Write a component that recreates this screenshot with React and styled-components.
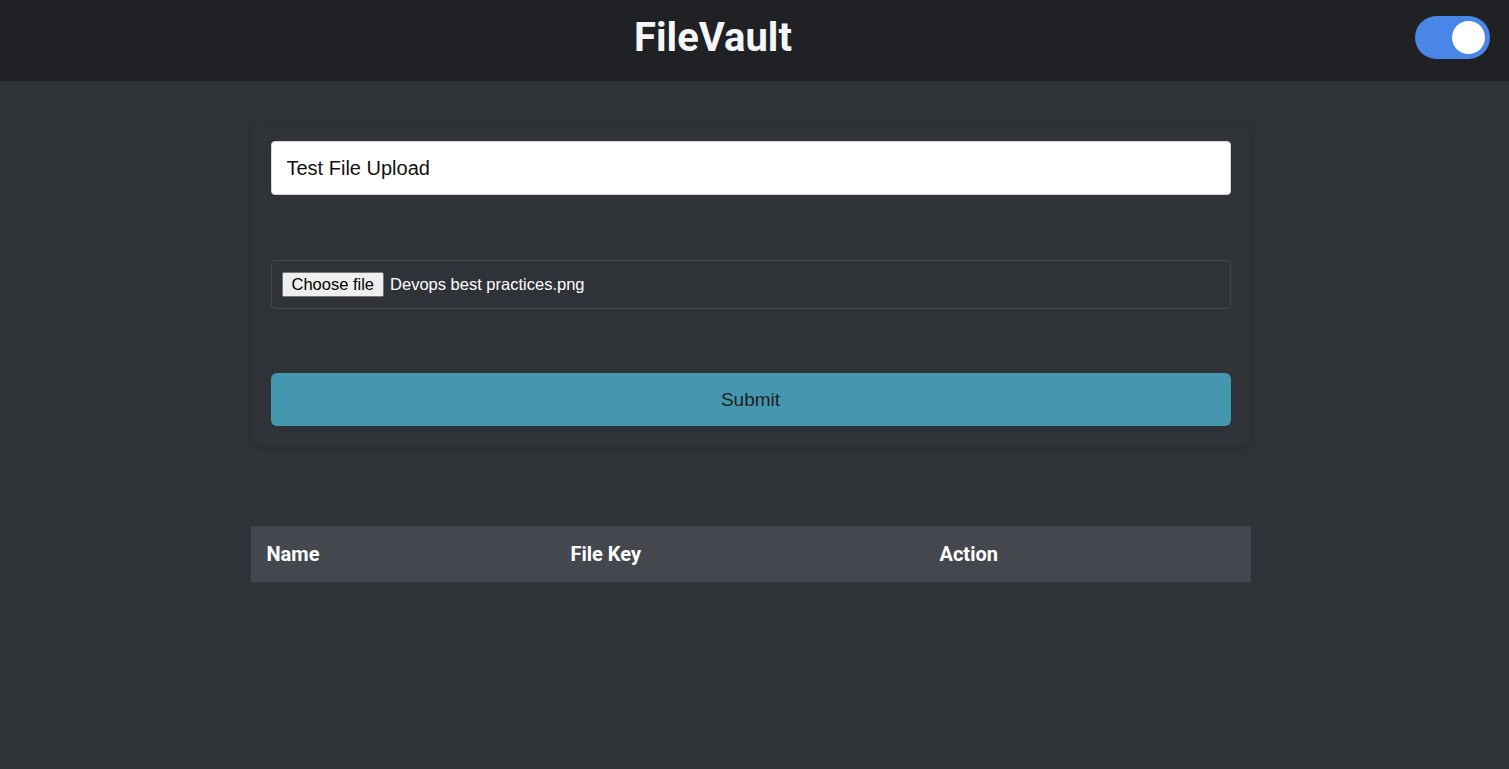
import React, { useState } from "react";
import styled, { createGlobalStyle } from "styled-components";

const GlobalStyle = createGlobalStyle`
  * { box-sizing: border-box; }
  body {
    margin: 0;
    background: #303338;
    font-family: "Liberation Sans", Arial, sans-serif;
  }
`;

const Page = styled.div`
  min-height: 769px;
  background: #303338;
`;

const Header = styled.header`
  display: flex;
  align-items: center;
  height: 81px;
  padding: 0 19px 6px 11px;
  background: #202125;
`;

const Title = styled.h1`
  flex: 1;
  margin: 0;
  text-align: center;
  font-family: Roboto, "Liberation Sans", sans-serif;
  font-size: 40px;
  font-weight: 700;
  color: #f5f6f8;
`;

const Toggle = styled.button`
  position: relative;
  width: 75px;
  height: 43px;
  border: none;
  border-radius: 22px;
  padding: 0;
  background: ${(p) => (p.$on ? "#4a86e8" : "#7a7d83")};
  cursor: pointer;
`;

const Knob = styled.span`
  position: absolute;
  top: 5px;
  left: ${(p) => (p.$on ? "37px" : "5px")};
  width: 33px;
  height: 33px;
  border-radius: 50%;
  background: #ffffff;
`;

const Main = styled.main`
  display: flex;
  flex-direction: column;
  align-items: center;
  padding: 40px 8px 0 0;
`;

const Card = styled.form`
  display: flex;
  flex-direction: column;
  gap: 65px;
  width: 1000px;
  padding: 20px;
  background: #2f3237;
  border-radius: 8px;
  box-shadow: 0 2px 8px rgba(0, 0, 0, 0.18);
`;

const TextInput = styled.input`
  width: 100%;
  height: 54px;
  padding: 0 15px;
  border: 1px solid #d8d8d8;
  border-radius: 4px;
  background: #ffffff;
  font-family: "Liberation Sans", Arial, sans-serif;
  font-size: 20px;
  color: #111;
  outline: none;
`;

const FileBox = styled.label`
  display: flex;
  align-items: center;
  gap: 6px;
  height: 49px;
  padding: 0 10px;
  border: 1px solid #45484d;
  border-radius: 4px;
  font-size: 16.5px;
  color: #ffffff;
`;

const FakeButton = styled.span`
  display: inline-flex;
  align-items: center;
  height: 25px;
  padding: 0 9px;
  border: 1px solid #767676;
  border-radius: 2px;
  background: #efefef;
  color: #000;
  font-size: 16.5px;
`;

const Submit = styled.button`
  height: 53px;
  margin-top: -1px;
  border: none;
  border-radius: 6px;
  background: #4596af;
  font-family: "Liberation Sans", Arial, sans-serif;
  font-size: 19px;
  color: #1c1f22;
  cursor: pointer;
`;

const Table = styled.table`
  width: 1000px;
  margin-top: 80px;
  border-collapse: collapse;
`;

const Th = styled.th`
  width: ${(p) => p.$w}px;
  height: 56px;
  padding: 0 16px;
  background: #44474d;
  text-align: left;
  font-family: Roboto, "Liberation Sans", sans-serif;
  font-size: 20px;
  font-weight: 700;
  color: #ffffff;
`;

export default function App() {
  const [dark, setDark] = useState(true);
  return (
    <Page>
      <GlobalStyle />
      <Header>
        <Title>FileVault</Title>
        <Toggle type="button" $on={dark} onClick={() => setDark(!dark)}>
          <Knob $on={dark} />
        </Toggle>
      </Header>
      <Main>
        <Card onSubmit={(e) => e.preventDefault()}>
          <TextInput defaultValue="Test File Upload" />
          <FileBox>
            <FakeButton>Choose file</FakeButton>
            <span>Devops best practices.png</span>
          </FileBox>
          <Submit type="submit">Submit</Submit>
        </Card>
        <Table>
          <thead>
            <tr>
              <Th $w={304}>Name</Th>
              <Th $w={369}>File Key</Th>
              <Th $w={327}>Action</Th>
            </tr>
          </thead>
        </Table>
      </Main>
    </Page>
  );
}
